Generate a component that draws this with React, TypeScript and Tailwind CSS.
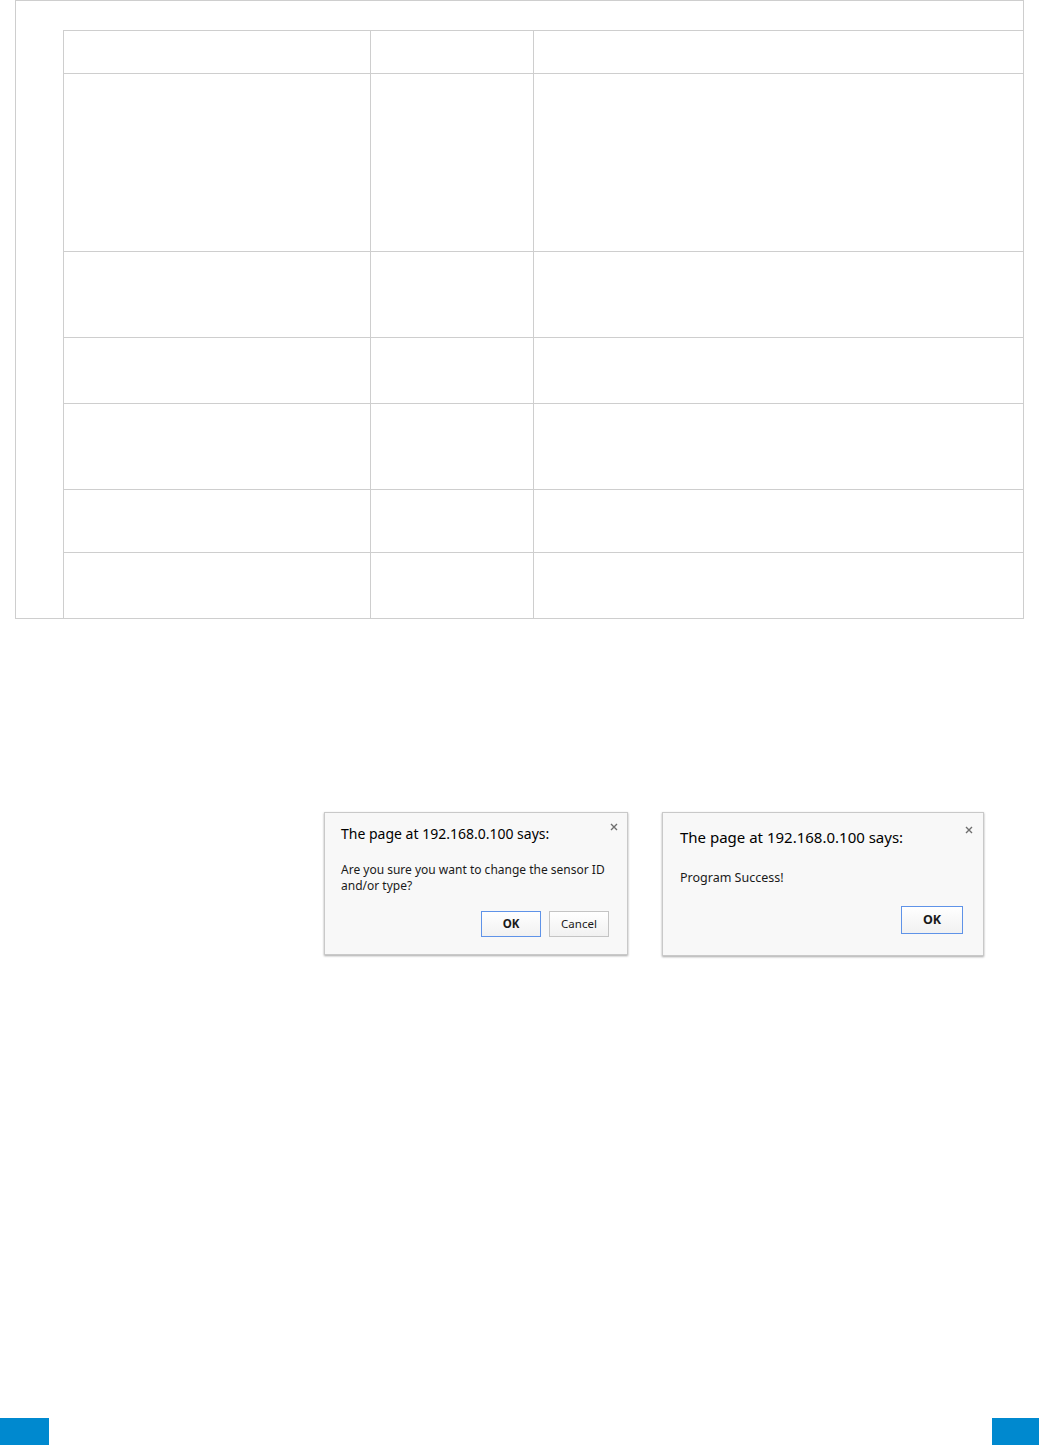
import React from 'react';

const rows = ['h-[43px]', 'h-[178px]', 'h-[86px]', 'h-[66px]', 'h-[86px]', 'h-[63px]', 'h-[66px]'];

function Close({ className }: { className: string }) {
  return (
    <svg className={className} width="8" height="8" viewBox="0 0 8 8">
      <path d="M1 1L7 7M7 1L1 7" stroke="#6f6f6f" strokeWidth="1.4" />
    </svg>
  );
}

export default function App() {
  return (
    <main
      className="bg-white w-[1039px] min-h-[1445px] flex flex-col text-[#1a1a1a]"
      style={{ fontFamily: '"Noto Sans", "Open Sans", sans-serif' }}
    >
      {/* Table frame */}
      <div className="ml-[15px] w-[1009px] border border-[#cecece] pt-[29px] pl-[47px]">
        <div className="grid grid-cols-[307px_163px_490px]">
          {rows.map((h, i) => (
            <React.Fragment key={i}>
              <div className={`${h} border-l border-t border-[#cecece]`} />
              <div className={`${h} border-l border-t border-[#cecece]`} />
              <div className={`${h} border-l border-t border-[#cecece]`} />
            </React.Fragment>
          ))}
        </div>
      </div>

      {/* Dialogs */}
      <div className="mt-[193px] ml-[324px] flex items-start gap-[34px]">
        <div className="relative w-[304px] h-[143px] bg-[#f8f8f8] border border-[#c9c9c9] shadow-[0_1px_2px_rgba(0,0,0,0.35)] pt-[12px] pl-[16px] pr-[18px]">
          <Close className="absolute top-[10px] right-[9px]" />
          <div className="text-[14px] leading-[18px] text-black">The page at 192.168.0.100 says:</div>
          <div className="mt-[19px] text-[12px] leading-[16px]">
            Are you sure you want to change the sensor ID
            <br />
            and/or type?
          </div>
          <div className="mt-[17px] flex justify-end gap-[8px]">
            <button className="w-[60px] h-[26px] border border-[#5f93e8] bg-gradient-to-b from-white to-[#f1f1f1] text-[11.5px] font-bold">
              OK
            </button>
            <button className="w-[60px] h-[26px] border border-[#c4c4c4] bg-gradient-to-b from-white to-[#f1f1f1] text-[11.5px]">
              Cancel
            </button>
          </div>
        </div>

        <div className="relative w-[322px] h-[144px] bg-[#f8f8f8] border border-[#c9c9c9] shadow-[0_1px_2px_rgba(0,0,0,0.35)] pt-[14px] pl-[17px] pr-[20px]">
          <Close className="absolute top-[13px] right-[10px]" />
          <div className="text-[15px] leading-[20px] text-black">The page at 192.168.0.100 says:</div>
          <div className="mt-[22px] text-[12.5px] leading-[18px]">Program Success!</div>
          <div className="mt-[19px] flex justify-end">
            <button className="w-[62px] h-[28px] border border-[#5f93e8] bg-gradient-to-b from-white to-[#f1f1f1] text-[12.5px] font-bold">
              OK
            </button>
          </div>
        </div>
      </div>

      {/* Footer tabs */}
      <div className="mt-auto flex justify-between">
        <div className="w-[49px] h-[27px] bg-[#0089cf]" />
        <div className="w-[47px] h-[27px] bg-[#0089cf]" />
      </div>
    </main>
  );
}
